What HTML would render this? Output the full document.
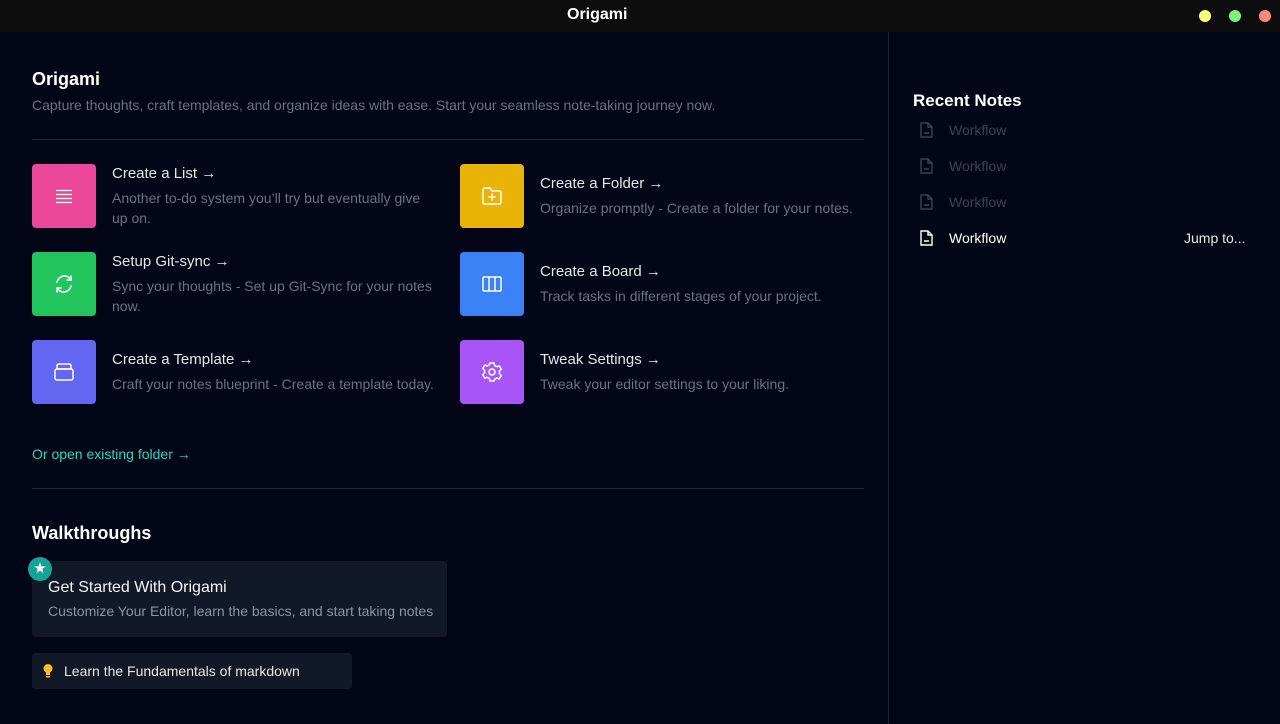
<!DOCTYPE html>
<html><head><meta charset="utf-8"><style>
*{margin:0;padding:0;box-sizing:border-box}
body{width:1280px;height:724px;background:#020617;font-family:"Liberation Sans",sans-serif;overflow:hidden;position:relative;color:#fff}
.top{position:absolute;left:0;top:0;width:1280px;height:32px;background:#0d0d0d}
.ttl{position:absolute;left:567px;top:6px;font-weight:bold;font-size:16px;color:#fff}
.dot{position:absolute;top:10px;width:12px;height:12px;border-radius:50%}
.side{position:absolute;left:888px;top:32px;width:1px;height:692px;background:#1e2330}
.abs{position:absolute}
.h1{font-weight:bold;font-size:18px}
.sub{color:#6b7280;font-size:14px}
.hr{position:absolute;left:32px;width:832px;height:1px;background:#1f2937}
.tile{position:absolute;width:64px;height:64px;border-radius:4px;display:flex;align-items:center;justify-content:center}
.tt{position:absolute;color:#e5e7eb;font-size:15px}
.td{position:absolute;font-size:14px;color:#6b7280;line-height:20px;width:315px}
.note{position:absolute;left:918px;font-size:14px;color:#3b4252}
.note svg{position:absolute;left:0;top:0}
.note span{position:absolute;left:31px;top:1px;white-space:nowrap}
</style></head><body>
<div class="top"></div>
<div class="ttl">Origami</div>
<div class="dot" style="left:1199px;background:#fdfd7a"></div>
<div class="dot" style="left:1229px;background:#7df37d"></div>
<div class="dot" style="left:1259px;background:#fa8a78"></div>
<div class="side"></div>

<div class="abs h1" style="left:32px;top:69px">Origami</div>
<div class="abs sub" style="left:32px;top:97px">Capture thoughts, craft templates, and organize ideas with ease. Start your seamless note-taking journey now.</div>
<div class="hr" style="top:139px"></div>

<div class="tile" style="left:32px;top:164px;background:#ec4899"><svg width="20" height="20" stroke="#fff" stroke-width="1.2"><path d="M2 4.5h16M2 8.5h16M2 12.5h16M2 16.5h16"/></svg></div>
<div class="tt" style="left:112px;top:165px">Create a List →</div>
<div class="td" style="left:112px;top:188px">Another to-do system you’ll try but eventually give up on.</div>

<div class="tile" style="left:32px;top:252px;background:#22c55e"><svg width="22" height="22" fill="none" stroke="#fff" stroke-width="1.6" stroke-linecap="round"><path d="M4 9a7.5 7.5 0 0 1 14-2M18 3v4h-4M18 13a7.5 7.5 0 0 1-14 2M4 19v-4h4"/></svg></div>
<div class="tt" style="left:112px;top:253px">Setup Git-sync →</div>
<div class="td" style="left:112px;top:276px;width:335px">Sync your thoughts - Set up Git-Sync for your notes now.</div>

<div class="tile" style="left:32px;top:340px;background:#6366f1"><svg width="22" height="22" fill="none" stroke="#fff" stroke-width="1.5"><rect x="2" y="8" width="18" height="11" rx="2"/><path d="M4 8V5q0-2 2-2h10q2 0 2 2v3M3 8h16"/></svg></div>
<div class="tt" style="left:112px;top:351px">Create a Template →</div>
<div class="td" style="left:112px;top:374px;width:360px">Craft your notes blueprint - Create a template today.</div>

<div class="tile" style="left:460px;top:164px;background:#eab308"><svg width="22" height="22" fill="none" stroke="#fff" stroke-width="1.5" stroke-linecap="round"><path d="M2 5q0-2 2-2h5l2 3h7q2 0 2 2v9q0 2-2 2H4q-2 0-2-2z"/><path d="M11 9v6M8 12h6"/></svg></div>
<div class="tt" style="left:540px;top:175px">Create a Folder →</div>
<div class="td" style="left:540px;top:198px;width:360px">Organize promptly - Create a folder for your notes.</div>

<div class="tile" style="left:460px;top:252px;background:#3b82f6"><svg width="22" height="22" fill="none" stroke="#fff" stroke-width="1.5"><rect x="2" y="4" width="18" height="14" rx="1"/><path d="M8 4v14M14 4v14"/></svg></div>
<div class="tt" style="left:540px;top:263px">Create a Board →</div>
<div class="td" style="left:540px;top:286px;width:360px">Track tasks in different stages of your project.</div>

<div class="tile" style="left:460px;top:340px;background:#a855f7"><svg width="22" height="22" fill="none" stroke="#fff" stroke-width="1.5"><path d="M9 2h4l.6 2.5 2.2 1.2 2.5-.8 2 3.4-1.9 1.8v2.6l1.9 1.8-2 3.4-2.5-.8-2.2 1.2L13 20H9l-.6-2.5-2.2-1.2-2.5.8-2-3.4 1.9-1.8V9.3L1.7 7.5l2-3.4 2.5.8 2.2-1.2z"/><circle cx="11" cy="11" r="3"/></svg></div>
<div class="tt" style="left:540px;top:351px">Tweak Settings →</div>
<div class="td" style="left:540px;top:374px;width:360px">Tweak your editor settings to your liking.</div>

<div class="abs" style="left:32px;top:446px;font-size:14px;color:#2dd4bf">Or open existing folder →</div>
<div class="hr" style="top:488px"></div>

<div class="abs h1" style="left:32px;top:523px;font-size:18px">Walkthroughs</div>
<div class="abs" style="left:32px;top:561px;width:415px;height:76px;background:#111827;border-radius:3px"></div>
<div class="abs" style="left:28px;top:557px;width:24px;height:24px;border-radius:50%;background:#14a394;color:#fff;text-align:center;font-size:15px;line-height:24px">★</div>
<div class="abs" style="left:48px;top:579px;font-size:16px;color:#f3f4f6">Get Started With Origami</div>
<div class="abs" style="left:48px;top:603px;font-size:14px;color:#8b93a3">Customize Your Editor, learn the basics, and start taking notes</div>
<div class="abs" style="left:32px;top:653px;width:320px;height:36px;background:#111827;border-radius:3px"></div>
<svg class="abs" style="left:42px;top:663px" width="12" height="16"><circle cx="6" cy="5.5" r="4.5" fill="#fbbf24"/><rect x="4" y="9" width="4" height="3" fill="#fbbf24"/><rect x="4" y="13" width="4" height="1.5" fill="#fbbf24"/></svg>
<div class="abs" style="left:64px;top:663px;font-size:14px;color:#e5e7eb">Learn the Fundamentals of markdown</div>

<div class="abs h1" style="left:913px;top:91px;font-size:17px">Recent Notes</div>
<div class="note" style="top:121px"><svg width="18" height="18" fill="none" stroke="#3b4252" stroke-width="1.4"><path d="M3 2h7l4 4v10H3z"/><path d="M10 2v4h4M6 12h5"/></svg><span>Workflow</span></div>
<div class="note" style="top:157px"><svg width="18" height="18" fill="none" stroke="#3b4252" stroke-width="1.4"><path d="M3 2h7l4 4v10H3z"/><path d="M10 2v4h4M6 12h5"/></svg><span>Workflow</span></div>
<div class="note" style="top:193px"><svg width="18" height="18" fill="none" stroke="#3b4252" stroke-width="1.4"><path d="M3 2h7l4 4v10H3z"/><path d="M10 2v4h4M6 12h5"/></svg><span>Workflow</span></div>
<div class="note" style="top:229px;color:#fff"><svg width="18" height="18" fill="none" stroke="#fff" stroke-width="1.4"><path d="M3 2h7l4 4v10H3z"/><path d="M10 2v4h4M6 12h5"/></svg><span>Workflow</span></div>
<div class="abs" style="left:1184px;top:230px;font-size:14px;color:#e5e7eb">Jump to...</div>
</body></html>
